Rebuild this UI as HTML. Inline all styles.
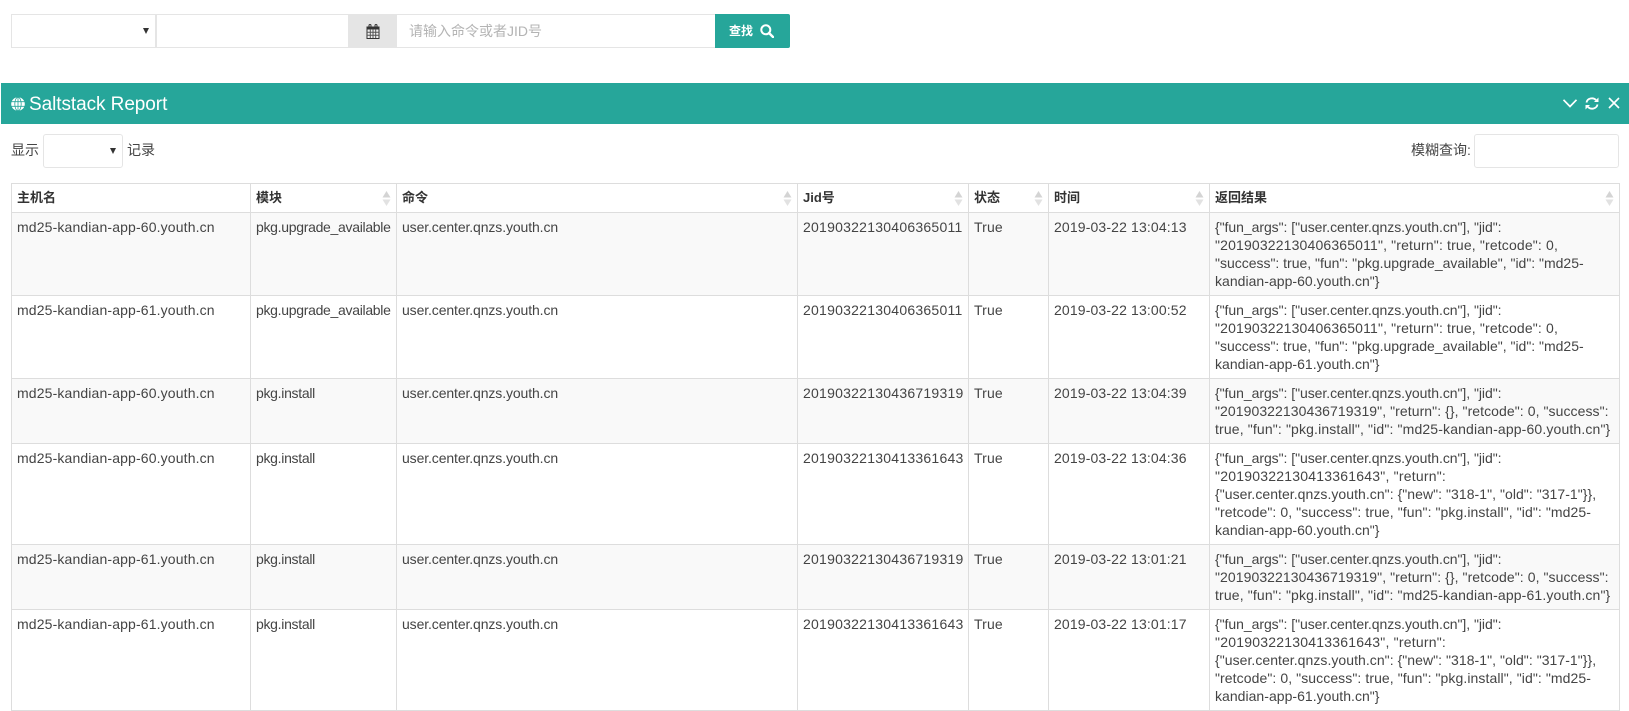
<!DOCTYPE html>
<html lang="zh-CN">
<head>
<meta charset="utf-8">
<title>Saltstack Report</title>
<style>
html,body{margin:0;padding:0;background:#fff;}
body{position:relative;width:1629px;height:711px;overflow:hidden;font-family:"Liberation Sans","Noto Sans CJK SC",sans-serif;font-size:14px;color:#444;}
.abs{position:absolute;box-sizing:border-box;}
.field{border:1px solid #e5e5e5;background:#fff;margin:0;padding:0;outline:0;appearance:none;-webkit-appearance:none;display:block;}
.tri{position:absolute;width:0;height:0;border-left:3px solid transparent;border-right:3px solid transparent;border-top:6px solid #333;}
input::placeholder{color:#b4b4b4;opacity:1;}
table{position:absolute;left:11px;top:183px;width:1608px;table-layout:fixed;border-collapse:collapse;}
th,td{border:1px solid #ddd;padding:5px;line-height:18px;text-align:left;vertical-align:top;white-space:nowrap;overflow:hidden;}
th{position:relative;font-size:13px;font-weight:bold;color:#333;padding:5px;height:18px;}
td{font-size:14px;letter-spacing:.14px;color:#444;}
td:nth-child(2){letter-spacing:-.3px;}
td:nth-child(3){letter-spacing:-.11px;}
td:nth-child(4){letter-spacing:.24px;}
.a{letter-spacing:-.05px}.b{letter-spacing:.157px}.c{letter-spacing:-.01px}.d{letter-spacing:.03px}.e{letter-spacing:.07px}.f{letter-spacing:.143px}.g{letter-spacing:.218px}.h{letter-spacing:.047px}.i{letter-spacing:.083px}
tbody tr:nth-child(odd) td{background:#f9f9f9;}
.sort{position:absolute;right:5px;top:7px;width:9px;height:15px;}
</style>
</head>
<body>

<select class="abs field" style="left:11px;top:14px;width:145px;height:34px;"></select>
<div class="tri" style="left:143px;top:28px;"></div>
<input class="abs field" type="text" style="left:156px;top:14px;width:193px;height:34px;">
<div class="abs" style="left:349px;top:14px;width:47px;height:34px;background:#e5e5e5;">
<svg style="position:absolute;left:17px;top:10px;" width="14" height="15" viewBox="0 0 14 15"><rect x="1" y="3" width="12" height="11.500" fill="#f0f0f0" stroke="#333" stroke-width="1"/><path d="M1 3h12v2.500H1z" fill="#333"/><path d="M3 4V1.500a1 1 0 0 1 2 0V4M9 4V1.500a1 1 0 0 1 2 0V4" fill="none" stroke="#333" stroke-width="1"/><path d="M1 8.200h12M1 11.200h12M4.300 5v9M7 5v9M9.700 5v9" stroke="#555" stroke-width="1" fill="none"/></svg>
</div>
<input class="abs field" type="text" placeholder="请输入命令或者JID号" style="left:396px;top:14px;width:320px;height:34px;padding-left:12px;font:14px 'Liberation Sans','Noto Sans CJK SC',sans-serif;">
<div class="abs" style="left:715px;top:14px;width:75px;height:34px;background:#26a69a;border-radius:0 2px 2px 0;color:#fff;font-size:12px;font-weight:bold;line-height:34px;padding-left:14px;">查找
<svg style="position:absolute;left:45px;top:10px;" width="14" height="14" viewBox="0 0 14 14"><circle cx="5.800" cy="5.800" r="4.500" fill="none" stroke="#fff" stroke-width="2"/><path d="M9 9l4 4" stroke="#fff" stroke-width="2.400" stroke-linecap="round"/></svg>
</div>

<div class="abs" style="left:1px;top:83px;width:1628px;height:41px;background:#26a69a;">
<svg style="position:absolute;left:10px;top:14px;" width="14" height="14" viewBox="0 0 14 14"><circle cx="7" cy="7" r="6.800" fill="#fff"/><path d="M.5 4.700h13M.5 9.300h13M7 0v14" stroke="#26a69a" stroke-width=".8" fill="none"/><ellipse cx="7" cy="7" rx="3.200" ry="6.800" fill="none" stroke="#26a69a" stroke-width=".8"/></svg>
<div style="position:absolute;left:28px;top:10px;color:#fff;font-size:19px;line-height:24px;letter-spacing:-.07px;white-space:nowrap;">Saltstack Report</div>
<svg style="position:absolute;left:1561px;top:15px;" width="16" height="11" viewBox="0 0 16 11"><path d="M1.500 1.800L8 8.500l6.500-6.700" fill="none" stroke="#fff" stroke-width="1.700"/></svg>
<svg style="position:absolute;left:1584px;top:14px;" width="14" height="13" viewBox="0 0 14 13"><path d="M1.500 5.500A5.500 5 0 0 1 11 3" fill="none" stroke="#fff" stroke-width="1.800"/><path d="M13.500 .5v4.500H9z" fill="#fff"/><path d="M12.500 7.500A5.500 5 0 0 1 3 10" fill="none" stroke="#fff" stroke-width="1.800"/><path d="M.5 12.500V8H5z" fill="#fff"/></svg>
<svg style="position:absolute;left:1607px;top:14px;" width="12" height="12" viewBox="0 0 12 12"><path d="M1 1l10 10M11 1L1 11" fill="none" stroke="#fff" stroke-width="1.600"/></svg>
</div>

<div class="abs" style="left:11px;top:141px;line-height:18px;white-space:nowrap;">显示</div>
<select class="abs field" style="left:43px;top:134px;width:80px;height:34px;border-radius:3px;"></select>
<div class="tri" style="left:110px;top:148px;"></div>
<div class="abs" style="left:127px;top:141px;line-height:18px;white-space:nowrap;">记录</div>
<div class="abs" style="left:1411px;top:141px;line-height:18px;white-space:nowrap;">模糊查询:</div>
<input class="abs field" type="text" style="left:1474px;top:134px;width:145px;height:34px;border-radius:3px;">

<table>
<colgroup><col style="width:239px"><col style="width:146px"><col style="width:401px"><col style="width:171px"><col style="width:80px"><col style="width:161px"><col style="width:410px"></colgroup>
<thead><tr>
<th>主机名</th>
<th>模块<svg class="sort" viewBox="0 0 9 15"><path d="M4.500 0L8.500 6.500H.5z" fill="#d4d4d4"/><path d="M4.500 15L8.500 8.500H.5z" fill="#e2e2e2"/></svg></th>
<th>命令<svg class="sort" viewBox="0 0 9 15"><path d="M4.500 0L8.500 6.500H.5z" fill="#d4d4d4"/><path d="M4.500 15L8.500 8.500H.5z" fill="#e2e2e2"/></svg></th>
<th>Jid号<svg class="sort" viewBox="0 0 9 15"><path d="M4.500 0L8.500 6.500H.5z" fill="#d4d4d4"/><path d="M4.500 15L8.500 8.500H.5z" fill="#e2e2e2"/></svg></th>
<th>状态<svg class="sort" viewBox="0 0 9 15"><path d="M4.500 0L8.500 6.500H.5z" fill="#d4d4d4"/><path d="M4.500 15L8.500 8.500H.5z" fill="#e2e2e2"/></svg></th>
<th>时间<svg class="sort" viewBox="0 0 9 15"><path d="M4.500 0L8.500 6.500H.5z" fill="#d4d4d4"/><path d="M4.500 15L8.500 8.500H.5z" fill="#e2e2e2"/></svg></th>
<th>返回结果<svg class="sort" viewBox="0 0 9 15"><path d="M4.500 0L8.500 6.500H.5z" fill="#d4d4d4"/><path d="M4.500 15L8.500 8.500H.5z" fill="#e2e2e2"/></svg></th>
</tr></thead>
<tbody>
<tr><td>md25-kandian-app-60.youth.cn</td><td>pkg.upgrade_available</td><td>user.center.qnzs.youth.cn</td><td>20190322130406365011</td><td>True</td><td>2019-03-22 13:04:13</td><td><span class="a">{"fun_args": ["user.center.qnzs.youth.cn"], "jid":</span><br><span class="b">"20190322130406365011", "return": true, "retcode": 0,</span><br><span class="c">"success": true, "fun": "pkg.upgrade_available", "id": "md25-</span><br><span class="d">kandian-app-60.youth.cn"}</span></td></tr>
<tr><td>md25-kandian-app-61.youth.cn</td><td>pkg.upgrade_available</td><td>user.center.qnzs.youth.cn</td><td>20190322130406365011</td><td>True</td><td>2019-03-22 13:00:52</td><td><span class="a">{"fun_args": ["user.center.qnzs.youth.cn"], "jid":</span><br><span class="b">"20190322130406365011", "return": true, "retcode": 0,</span><br><span class="c">"success": true, "fun": "pkg.upgrade_available", "id": "md25-</span><br><span class="d">kandian-app-61.youth.cn"}</span></td></tr>
<tr><td>md25-kandian-app-60.youth.cn</td><td>pkg.install</td><td>user.center.qnzs.youth.cn</td><td>20190322130436719319</td><td>True</td><td>2019-03-22 13:04:39</td><td><span class="a">{"fun_args": ["user.center.qnzs.youth.cn"], "jid":</span><br><span class="e">"20190322130436719319", "return": {}, "retcode": 0, "success":</span><br><span class="f">true, "fun": "pkg.install", "id": "md25-kandian-app-60.youth.cn"}</span></td></tr>
<tr><td>md25-kandian-app-60.youth.cn</td><td>pkg.install</td><td>user.center.qnzs.youth.cn</td><td>20190322130413361643</td><td>True</td><td>2019-03-22 13:04:36</td><td><span class="a">{"fun_args": ["user.center.qnzs.youth.cn"], "jid":</span><br><span class="g">"20190322130413361643", "return":</span><br><span class="h">{"user.center.qnzs.youth.cn": {"new": "318-1", "old": "317-1"}},</span><br><span class="i">"retcode": 0, "success": true, "fun": "pkg.install", "id": "md25-</span><br><span class="d">kandian-app-60.youth.cn"}</span></td></tr>
<tr><td>md25-kandian-app-61.youth.cn</td><td>pkg.install</td><td>user.center.qnzs.youth.cn</td><td>20190322130436719319</td><td>True</td><td>2019-03-22 13:01:21</td><td><span class="a">{"fun_args": ["user.center.qnzs.youth.cn"], "jid":</span><br><span class="e">"20190322130436719319", "return": {}, "retcode": 0, "success":</span><br><span class="f">true, "fun": "pkg.install", "id": "md25-kandian-app-61.youth.cn"}</span></td></tr>
<tr><td>md25-kandian-app-61.youth.cn</td><td>pkg.install</td><td>user.center.qnzs.youth.cn</td><td>20190322130413361643</td><td>True</td><td>2019-03-22 13:01:17</td><td><span class="a">{"fun_args": ["user.center.qnzs.youth.cn"], "jid":</span><br><span class="g">"20190322130413361643", "return":</span><br><span class="h">{"user.center.qnzs.youth.cn": {"new": "318-1", "old": "317-1"}},</span><br><span class="i">"retcode": 0, "success": true, "fun": "pkg.install", "id": "md25-</span><br><span class="d">kandian-app-61.youth.cn"}</span></td></tr>
</tbody>
</table>
</body>
</html>
